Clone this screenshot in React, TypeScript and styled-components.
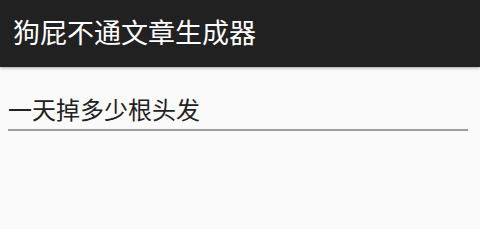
import styled, { createGlobalStyle } from 'styled-components'

const GlobalStyle = createGlobalStyle`
  html, body {
    margin: 0;
    padding: 0;
    background: #fafafa;
  }
  body {
    font-family: "Roboto", "Noto Sans CJK SC", sans-serif;
  }
`

const Page = styled.div`
  width: 480px;
  height: 229px;
  background: #fafafa;
  overflow: hidden;
`

const Toolbar = styled.header`
  height: 67px;
  background: #212121;
  display: flex;
  align-items: center;
  padding: 0 13px;
  box-sizing: border-box;
  box-shadow: 0 1px 3px rgba(0, 0, 0, 0.35);
`

const Title = styled.h1`
  margin: 0;
  color: #ffffff;
  font-size: 27px;
  font-weight: 400;
  font-family: "Noto Sans CJK SC", sans-serif;
  line-height: 1;
  margin-top: -4px;
`

const Content = styled.main`
  padding: 28px 12px 0 8px;
`

const TopicInput = styled.input`
  display: block;
  width: 460px;
  box-sizing: border-box;
  border: none;
  border-bottom: 2px solid #9e9e9e;
  background: transparent;
  outline: none;
  padding: 0 0 5px 0;
  font-size: 24px;
  color: #212121;
  font-family: "Noto Sans CJK SC", sans-serif;
  line-height: 1.2;
`

export default function App() {
  return (
    <>
      <GlobalStyle />
      <Page>
        <Toolbar>
          <Title>狗屁不通文章生成器</Title>
        </Toolbar>
        <Content>
          <TopicInput defaultValue="一天掉多少根头发" />
        </Content>
      </Page>
    </>
  )
}
